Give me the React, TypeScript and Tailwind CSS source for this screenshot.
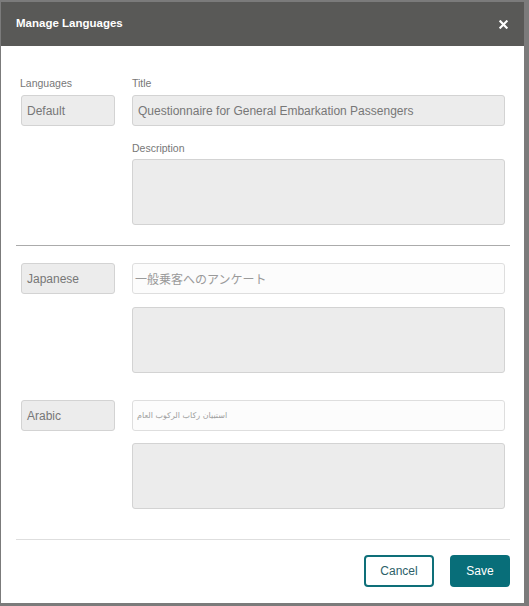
const rows = [
  { lang: "Japanese", title: "一般乗客へのアンケート", kind: "ja" },
  { lang: "Arabic", title: "استبيان ركاب الركوب العام", kind: "ar" },
];

const boxBase = "rounded-[3px] border border-[#d3d3d3] bg-[#ececec]";

export default function App() {
  return (
    <div className="w-[529px] h-[606px] bg-[#7b7b7b] overflow-hidden font-['Liberation_Sans',Arial,sans-serif]">
      <div className="ml-[1px] mt-[2px] w-[523px] h-[601px] bg-white flex flex-col">
        {/* header */}
        <div className="h-[44px] shrink-0 bg-[#595957] flex items-center justify-between pl-[15px] pr-[16px]">
          <h1 className="text-white text-[11.5px] font-bold">Manage Languages</h1>
          <button className="text-white">
            <svg width="9" height="9" viewBox="0 0 10 10">
              <path d="M1.5 1.5 L8.5 8.5 M8.5 1.5 L1.5 8.5" stroke="white" strokeWidth="2.4" strokeLinecap="square" />
            </svg>
          </button>
        </div>

        <div className="pl-[15px] pr-[14px] flex flex-col">
          {/* default language */}
          <div className="px-[5px] pt-[31px] pb-[20px]">
            <div className="flex gap-[17px]">
              <div className="w-[94px]">
                <div className="h-[12px] leading-[12px] text-[10.5px] text-[#777] -ml-[1px]">Languages</div>
                <div className={`mt-[6px] h-[31px] ${boxBase} flex items-center px-[5px] text-[12px] text-[#777]`}>
                  Default
                </div>
              </div>
              <div className="w-[373px]">
                <div className="h-[12px] leading-[12px] text-[10.5px] text-[#777]">Title</div>
                <div className={`mt-[6px] h-[31px] ${boxBase} flex items-center px-[5px] text-[12px] text-[#777]`}>
                  Questionnaire for General Embarkation Passengers
                </div>
                <div className="mt-[16px] h-[12px] leading-[12px] text-[10.5px] text-[#777]">Description</div>
                <div className={`mt-[5px] h-[66px] ${boxBase}`} />
              </div>
            </div>
          </div>

          <div className="h-px bg-[#ababab]" />

          {/* translations */}
          <div className="px-[5px] pt-[17px] pb-[30px] flex flex-col gap-[27px]">
            {rows.map((r) => (
              <div key={r.lang} className="flex gap-[17px]">
                <div className="w-[94px]">
                  <div className={`h-[31px] ${boxBase} flex items-center px-[5px] text-[12px] text-[#777]`}>
                    {r.lang}
                  </div>
                </div>
                <div className="w-[373px]">
                  <div className="h-[31px] rounded-[3px] border border-[#dedede] bg-[#fcfcfc] flex items-center">
                    {r.kind === "ja" ? (
                      <span className="pl-[2px] text-[12px] text-[#9a9a9a] font-['Noto_Sans_CJK_JP',sans-serif]">
                        {r.title}
                      </span>
                    ) : (
                      <span className="pl-[4px] text-[8px] text-[#a0a0a0] font-['DejaVu_Sans',sans-serif]">
                        {r.title}
                      </span>
                    )}
                  </div>
                  <div className={`${r.kind === "ja" ? "mt-[13px]" : "mt-[12px]"} h-[66px] ${boxBase}`} />
                </div>
              </div>
            ))}
          </div>

          <div className="h-px bg-[#dedede]" />

          {/* footer */}
          <div className="pt-[15px] flex justify-end gap-[16px]">
            <button className="w-[70px] h-[32px] rounded-[4px] border-2 border-[#0e6f79] bg-white text-[12px] text-[#2d5f69]">
              Cancel
            </button>
            <button className="w-[60px] h-[32px] rounded-[4px] bg-[#086e79] text-[12px] text-white">
              Save
            </button>
          </div>
        </div>
      </div>
    </div>
  );
}
